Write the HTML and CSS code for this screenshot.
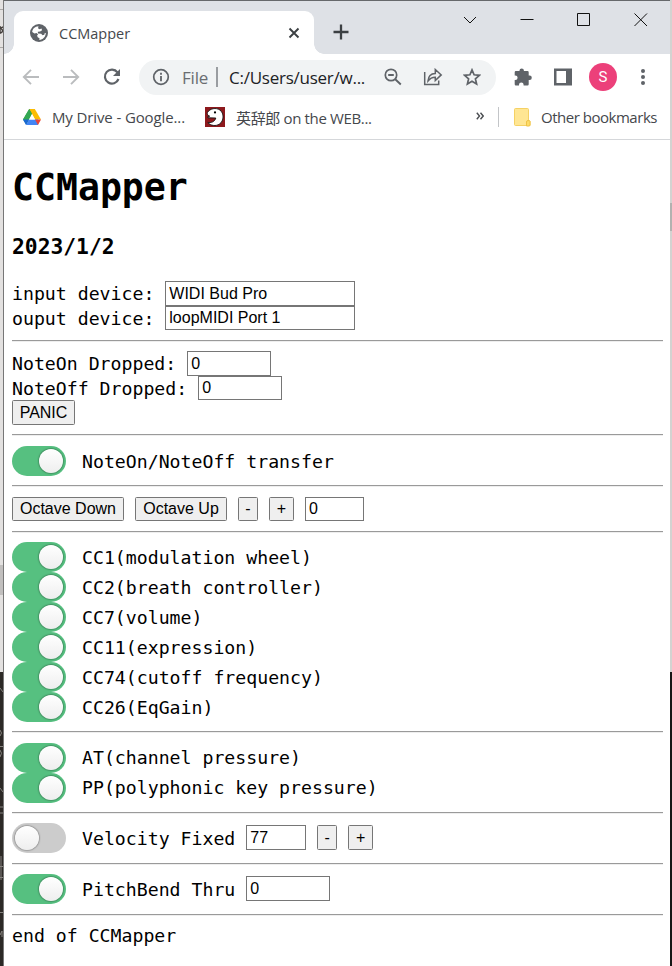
FILE: index.html
```html
<!DOCTYPE html>
<html lang="en">
<head>
<meta charset="utf-8">
<title>CCMapper</title>
<link rel="stylesheet" href="styles.css">
</head>
<body>
<div class="desk desk-left">
  <svg width="3" height="966" viewBox="0 0 3 966" fill="none">
    <path stroke="#aaa8a6" d="M0 9.5h3M0 47.500h3"/>
    <path stroke="#443f3c" stroke-width="1.500" d="M0 26v8M3 27l-2 1 2 3-2 2"/>
    <path stroke="#85827e" d="M0 688l3 4M0 730q3 3 0 6M0 746.500h3M0 750q3 3 0 7M0 788l3 4M0 807h3M0 813h3M1 856v24M0 866.500h3M0 877.500h3M0 912.500h3M0 935l2-4v6"/>
  </svg>
</div>
<div class="window">
  <header class="tabstrip">
    <div class="tab">
      <svg class="globe" width="18" height="18" viewBox="0 0 18 18"><circle cx="9" cy="9" r="9" fill="#5f6368"/><path fill="#fff" d="M2.200 8C2.300 5 4.800 2.400 8.500 2.200L8 4.300l1.500.9 2-.6.6 1.600-2 1.300-2.300.3.200 1.600 3.200.3 1.300 1.600 1.800-.6.5-1.700h1C15.500 13 13 15.700 9.300 15.900l.2-1.700-1.800-.9-.6-1.700 1-1.300-1.600-1.200-2 .4z"/></svg>
      <span class="tab-title">CCMapper</span>
      <svg class="tab-close" width="12" height="12" viewBox="0 0 12 12"><path d="M1.500 1.500l9 9m0-9l-9 9" stroke="#3c4043" stroke-width="1.900"/></svg>
    </div>
    <svg class="new-tab" width="16" height="16" viewBox="0 0 16 16"><path d="M8 .5v15M.5 8h15" stroke="#3c4043" stroke-width="2.300"/></svg>
    <div class="controls">
      <svg width="14" height="14" viewBox="0 0 14 14"><path d="M1 4l6 6 6-6"/></svg>
      <svg width="14" height="14" viewBox="0 0 14 14"><path d="M.5 6.500h13"/></svg>
      <svg width="14" height="14" viewBox="0 0 14 14"><path d="M.5.5h12v12H.5z"/></svg>
      <svg width="14" height="14" viewBox="0 0 14 14"><path d="M.5.5L13 13M13 .5L.5 13"/></svg>
    </div>
  </header>
  <nav class="toolbar">
    <svg class="back" width="18" height="18" viewBox="0 0 18 18"><path d="M17 9H2M9 1.800L1.800 9 9 16.200" fill="none" stroke="#babcbe" stroke-width="1.900"/></svg>
    <svg class="forward" width="18" height="18" viewBox="0 0 18 18"><path d="M1 9h15M9 1.800L16.200 9 9 16.200" fill="none" stroke="#babcbe" stroke-width="1.900"/></svg>
    <svg class="reload" width="20" height="18" viewBox="0 0 20 18"><path d="M15.500 4.300A7 7 0 1 0 16.500 11" fill="none" stroke="#5f6368" stroke-width="2.200"/><path d="M18 1v7h-7z" fill="#5f6368"/></svg>
    <div class="omnibox">
      <svg class="info" width="18" height="18" viewBox="0 0 18 18"><circle cx="9" cy="9" r="7.300" fill="none" stroke="#5f6368" stroke-width="1.700"/><path d="M9 4.800v1.900M9 8v5.300" stroke="#5f6368" stroke-width="1.800"/></svg>
      <span class="scheme">File</span>
      <span class="bar"></span>
      <span class="url">C:/Users/user/w...</span>
      <svg class="zoom" width="18" height="18" viewBox="0 0 18 18"><circle cx="7" cy="7" r="5.700" fill="none" stroke="#5f6368" stroke-width="1.700"/><path d="M11 11l5.800 5.500M4.200 7h5.600" stroke="#5f6368" stroke-width="1.900"/></svg>
      <svg class="share" width="20" height="18" viewBox="0 0 20 18"><path d="M1.700 4v12.500h14v-4M5 13c.3-5 3-7.500 7.300-7.600V1.500l5.900 5.400-5.900 5.600V9.300C9 9.200 7 10.500 5 13z" fill="none" stroke="#5f6368" stroke-width="1.500"/></svg>
      <svg class="star" width="18" height="18" viewBox="0 0 18 18"><path d="M9 1.900l2.100 4.900 5.300.5-4 3.500 1.200 5.200L9 13.200 4.400 16l1.200-5.200-4-3.500 5.300-.5z" fill="none" stroke="#5f6368" stroke-width="1.700"/></svg>
    </div>
    <svg class="puzzle" width="18" height="18" viewBox="0 0 18 18"><path fill="#5f6368" d="M15.600 7.600h-.9V4.200q0-1.200-1.200-1.200h-3.600V2.600a2.200 2.200 0 0 0-4.400 0V3H1.900Q.7 3 .7 4.200v3.200H1.300a2.300 2.300 0 0 1 0 4.600H.7v4.200q0 1.200 1.200 1.200H5v-.7a2.300 2.300 0 0 1 4.600 0v.7h3.900q1.200 0 1.200-1.200V12h.9a2.200 2.200 0 0 0 0-4.400z"/></svg>
    <svg class="panel" width="18" height="18" viewBox="0 0 18 18"><path fill="#5f6368" fill-rule="evenodd" d="M0 .5h18v17H0zM2.500 3v12H12V3z"/></svg>
    <span class="avatar">S</span>
    <svg class="menu" width="6" height="18" viewBox="0 0 6 18" fill="#5f6368"><circle cx="3" cy="3" r="2"/><circle cx="3" cy="9" r="2"/><circle cx="3" cy="15" r="2"/></svg>
  </nav>
  <div class="bookmarks">
    <svg class="drive" width="18" height="16" viewBox="0 0 18 16"><path fill="#34a853" d="M6.200 0H9L12 5 9 4.900 3.300 15.500 0 10.500z"/><path fill="#188038" d="M6.200 0h5.600L9 5z"/><path fill="#fbbc04" d="M11.800 0L18 10.500h-6L6.200 0z"/><path fill="#34a853" d="M6.200 0L0 10.500h6L9 5z"/><path fill="#4285f4" d="M3 16l3-5.500h9L15 16z"/><path fill="#1967d2" d="M0 10.500h6L3 16z"/><path fill="#ea4335" d="M12 10.500h6L15 16z"/><path fill="#fff" d="M9 5l3 5.500H6z"/></svg>
    <span class="drive-label">My Drive - Google...</span>
    <svg class="eijiro" width="20" height="20" viewBox="0 0 20 20"><path fill="#8d191d" d="M0 0h20v20H0z"/><path fill="#fff" stroke="#111" stroke-width=".9" d="M2.500 5.300C5 1.500 11 .3 14.800 3c4.500 3 4.300 11-.3 14-3.500 2.500-9 1.800-11.700-1.500 3 .5 7-.5 8-4.500l-7.800-.2V9.400l1.700-.2C2.800 8.500 1.800 7 2.500 5.300z"/><circle cx="10" cy="5.400" r="1.100"/></svg>
    <span class="eijiro-label">英辞郎 on the WEB...</span>
    <svg class="more" width="8" height="8" viewBox="0 0 8 8"><path d="M.8.7L3.500 4 .8 7.300M4.500.7L7.200 4 4.500 7.300" fill="none" stroke="#4b4e52" stroke-width="1.400"/></svg>
    <span class="divider"></span>
    <svg class="folder" width="17" height="19" viewBox="0 0 17 19"><path d="M2 .5h11.500q1 0 1 1V12l1.500 1v4.500H1.500q-1 0-1-1v-15q0-1 1-1z" fill="#ffe693" stroke="#f5d164"/><path d="M12.500 18v-4q0-1.500 1.500-1.500t2 1V17q0 1-1 1z" fill="#fddc69" stroke="#efc245"/></svg>
    <span class="other-label">Other bookmarks</span>
  </div>
  <main>
    <h1>CCMapper</h1>
    <h3>2023/1/2</h3>
    <div class="row"><span>input device:&nbsp;</span><input class="device" value="WIDI Bud Pro"></div>
    <div class="row short"><span>ouput device:&nbsp;</span><input class="device" value="loopMIDI Port 1"></div>
    <hr class="lower">
    <div class="row"><span>NoteOn Dropped:&nbsp;</span><input class="medium" value="0"></div>
    <div class="row short"><span>NoteOff Dropped:&nbsp;</span><input class="medium" value="0"></div>
    <div class="row"><button class="panic">PANIC</button></div>
    <hr class="roomy">
    <div class="switch-row"><i class="switch on"></i><span>NoteOn/NoteOff transfer</span></div>
    <hr class="roomy">
    <div class="row short octave"><button class="down">Octave Down</button><button class="up">Octave Up</button><button class="minus">-</button><button class="plus">+</button><input class="shift" value="0"></div>
    <hr class="lower">
    <div class="switch-row"><i class="switch on"></i><span>CC1(modulation wheel)</span></div>
    <div class="switch-row"><i class="switch on"></i><span>CC2(breath controller)</span></div>
    <div class="switch-row"><i class="switch on"></i><span>CC7(volume)</span></div>
    <div class="switch-row"><i class="switch on"></i><span>CC11(expression)</span></div>
    <div class="switch-row"><i class="switch on"></i><span>CC74(cutoff frequency)</span></div>
    <div class="switch-row"><i class="switch on"></i><span>CC26(EqGain)</span></div>
    <hr class="roomy">
    <div class="switch-row raised"><i class="switch on"></i><span>AT(channel pressure)</span></div>
    <div class="switch-row raised"><i class="switch on"></i><span>PP(polyphonic key pressure)</span></div>
    <hr>
    <div class="switch-row"><i class="switch"></i><span>Velocity Fixed&nbsp;</span><input class="velocity" value="77"><button class="minus">-</button><button class="plus">+</button></div>
    <hr class="lower">
    <div class="switch-row"><i class="switch on"></i><span>PitchBend Thru&nbsp;</span><input class="medium" value="0"></div>
    <hr class="lower last">
    <div class="row"><span>end of CCMapper</span></div>
  </main>
</div>
<div class="desk desk-right"></div>
</body>
</html>
```
FILE: styles.css
```css
* { box-sizing: border-box; }
body { margin: 0; width: 672px; height: 966px; display: flex; overflow: hidden; background: #fff; }
svg { display: block; flex: none; }
.desk { flex: none; height: 966px; }
.desk-left { width: 4px; border-right: 1px solid #777; background: linear-gradient(#e3e1e0 565px, #c1bfbe 565px 595px, #e3e1e0 595px 672px, #2c2926 672px); }
.desk-right { width: 2px; background: linear-gradient(#d3d3d1 203px, #b2b2b0 203px 231px, #d3d3d1 231px 672px, #171716 672px); }
.window { width: 666px; height: 966px; border-top: 1px solid #66686b; background: #fff; }

.tabstrip { height: 53px; display: flex; padding: 10px 0 0 10px; background: #dee1e6; }
.tab { position: relative; width: 300px; height: 43px; display: flex; align-items: center; border-radius: 9px 9px 0 0; background: #fff; padding: 0 14px 0 16px; }
.tab::before, .tab::after { content: ""; position: absolute; bottom: 0; width: 10px; height: 10px; }
.tab::before { left: -10px; background: radial-gradient(circle at 0 0, #dee1e6 9.5px, #fff 10px); }
.tab::after { right: -10px; background: radial-gradient(circle at 100% 0, #dee1e6 9.5px, #fff 10px); }
.tab-title, .toolbar, .bookmarks { font-family: "Open Sans", "Noto Sans CJK JP", sans-serif; white-space: nowrap; }
.tab-title { margin-left: 11px; padding-top: 2px; flex: 1; font-size: 14.5px; color: #45484c; }
.new-tab { margin: 13px 0 0 19px; }
.controls { display: flex; gap: 43px; margin: 2px 0 0 114px; }
.controls svg { fill: none; stroke: #111; stroke-width: 1; }

.toolbar { height: 46px; display: flex; align-items: center; font-size: 17px; padding-left: 18px; }
.forward { margin-left: 22px; }
.reload { margin-left: 22px; }
.omnibox { width: 357px; height: 35px; margin-left: 17px; display: flex; align-items: center; border-radius: 18px; background: #f1f3f4; padding-left: 13px; }
.scheme { width: 26px; margin-left: 12px; color: #6a6d71; letter-spacing: -.2px; }
.bar { width: 2px; height: 20px; margin-left: 8px; background: #9a9da1; }
.url { width: 136px; margin-left: 11px; color: #202124; letter-spacing: -.25px; }
.zoom { margin-left: 19px; }
.share { margin-left: 21px; }
.star { margin-left: 20px; }
.puzzle { margin-left: 18px; }
.panel { margin-left: 22px; }
.avatar { width: 28px; height: 28px; margin-left: 17px; border-radius: 50%; background: #ec407a; color: #fff; font: 15px/28px Roboto, sans-serif; text-align: center; }
.menu { margin-left: 23px; }

.bookmarks { height: 40px; display: flex; align-items: center; border-bottom: 1px solid #d5d7da; padding: 0 0 5px 19px; font-size: 15px; color: #45484c; }
.drive-label { width: 133px; margin-left: 11px; letter-spacing: -.12px; }
.eijiro { margin-left: 20px; }
.eijiro-label { width: 138px; margin-left: 11px; letter-spacing: -.35px; }
.more { margin: -3px 0 0 102px; }
.divider { width: 1px; height: 20px; margin-left: 14px; background: #c3c5c8; }
.folder { margin-left: 15px; }
.other-label { margin-left: 10px; letter-spacing: -.48px; }

main { padding: 26px 7px 0 8px; color: #000; font: 18.2px/25px "DejaVu Sans Mono", monospace; white-space: nowrap; }
h1 { margin: 0; font-size: 36.5px; line-height: 43px; }
h3 { margin: 25px 0 22px; font-size: 21.3px; line-height: 25px; }
hr { height: 2px; margin: 9px 0; border: 0; border-top: 1px solid #9a9a9a; border-bottom: 1px solid #eee; }
.roomy { margin-bottom: 10px; }
.lower { margin-top: 10px; }
.last { margin-bottom: 7px; }
.row { height: 25px; display: flex; align-items: stretch; }
.short { height: 24px; }
input, button { height: 25px; border: 1px solid #767676; border-radius: 0; margin: 0; color: #000; font: 16px "Liberation Sans", Arial, sans-serif; flex: none; }
input { padding: 1px 3px; background: #fff; }
button { padding: 0; background: #efefef; border-radius: 1.5px; }
.short input, .short button { height: 24px; }
.device { width: 190px; }
.medium { width: 84px; }
.panic { width: 63px; }
.octave { gap: 11px; }
.down { width: 112px; }
.up { width: 92px; }
.minus { width: 20px; }
.plus { width: 25px; }
.shift { width: 59px; }
.velocity { width: 60px; }
.switch-row { height: 30px; display: flex; align-items: center; line-height: 31px; }
.raised { line-height: 29px; }
.raised span { padding-bottom: 1px; }
.switch-row input, .switch-row button { margin-top: -1px; }
.switch-row button { margin-left: 11px; }
.switch { flex: none; width: 54px; height: 30px; margin-right: 16px; padding: 3px; display: flex; border-radius: 15px; background: #ccc; }
.switch::after { content: ""; width: 24px; height: 24px; border-radius: 50%; background: linear-gradient(#fff, #eee); box-shadow: 0 0 2px rgba(0,0,0,.75); }
.on { justify-content: flex-end; background: #56c080; }
```
